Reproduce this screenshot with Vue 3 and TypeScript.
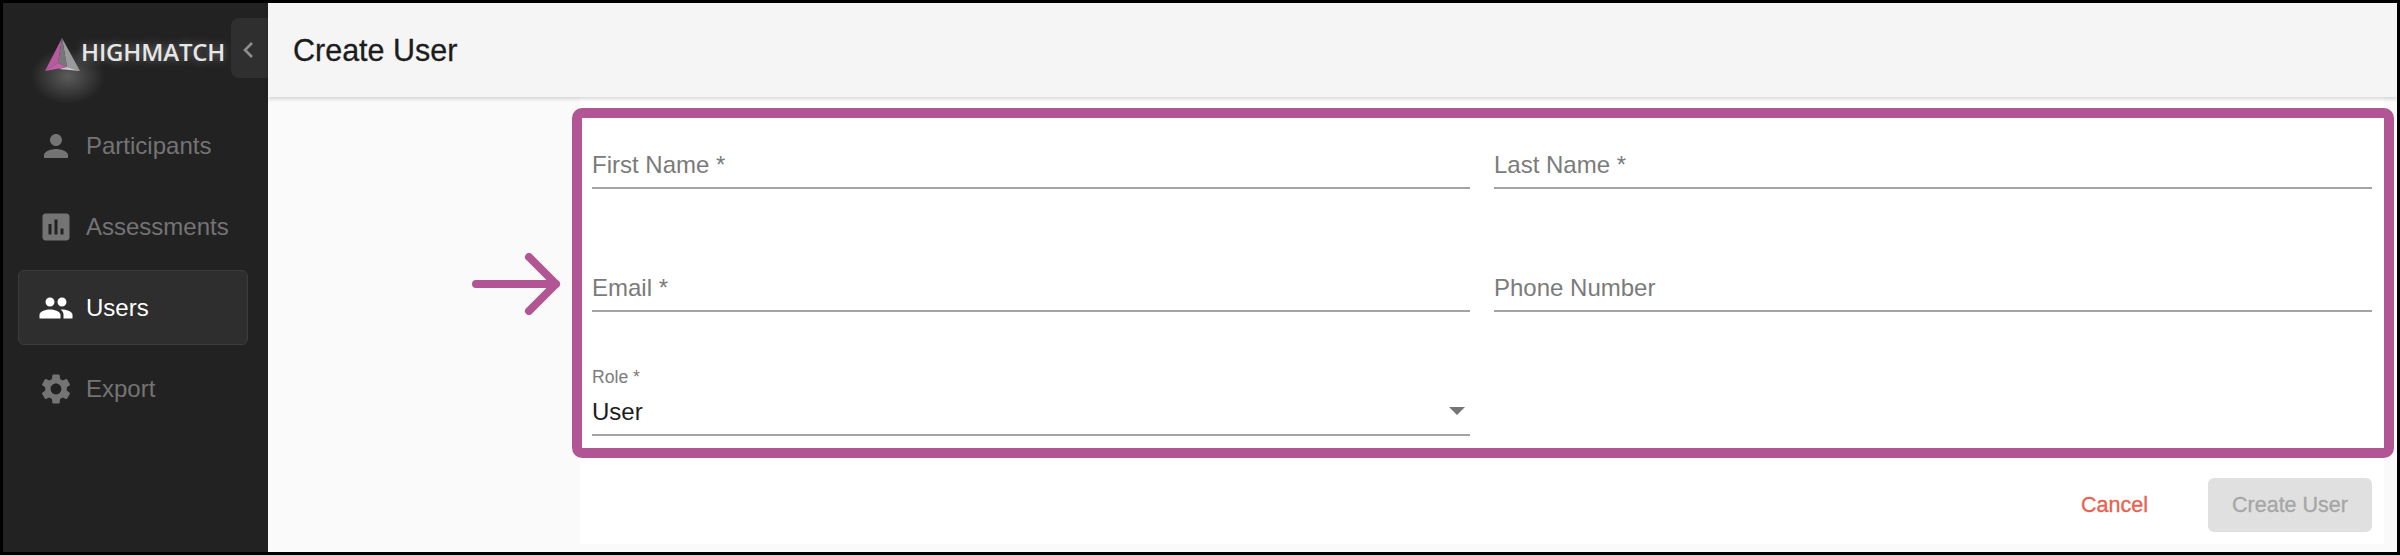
<template>
  <div class="page">
    <aside class="sidebar">
      <div class="brand">
        <div class="logo">
          <svg class="logo-mark" viewBox="0 0 36 34" aria-hidden="true">
            <polygon points="17,0 35,33 22,29" fill="#9a9a9c" />
            <polygon points="17,0 22,29 13,25" fill="#77777a" />
            <polygon points="17,0 13,25 0,33" fill="#b95aa0" />
            <polygon points="0,33 13,25 22,29" fill="#c060a6" />
            <polygon points="22,29 35,33 14,31" fill="#c9c9cb" />
          </svg>
          <span class="logo-text">HIGHMATCH</span>
        </div>
        <button class="collapse" type="button" aria-label="Collapse">
          <svg viewBox="0 0 12 18" aria-hidden="true">
            <path d="M10 2 L3 9 L10 16" />
          </svg>
        </button>
      </div>
      <nav class="nav">
        <a
          v-for="item in navItems"
          :key="item.label"
          class="nav-item"
          :class="{ active: item.active }"
        >
          <svg class="nav-icon" viewBox="0 0 24 24" aria-hidden="true">
            <path :d="item.icon" />
          </svg>
          <span>{{ item.label }}</span>
        </a>
      </nav>
    </aside>

    <main class="content">
      <header class="topbar">
        <h1>Create User</h1>
      </header>
      <section class="panel">
        <form class="form" @submit.prevent>
          <div v-for="field in fields" :key="field" class="field">
            <span class="placeholder">{{ field }}</span>
          </div>
          <div class="field select">
            <span class="select-label">Role *</span>
            <div class="select-value">
              <span>User</span>
              <span class="caret"></span>
            </div>
          </div>
        </form>
        <div class="actions">
          <button class="cancel" type="button">Cancel</button>
          <button class="submit" type="button" disabled>Create User</button>
        </div>

        <div class="highlight"></div>
        <svg class="arrow" viewBox="0 0 92 62" aria-hidden="true">
          <path d="M6 31 H86 M59 4 L86 31 L59 58" />
        </svg>
      </section>
    </main>
  </div>
</template>

<script setup lang="ts">
interface NavItem {
  label: string
  icon: string
  active?: boolean
}

const navItems: NavItem[] = [
  {
    label: 'Participants',
    icon: 'M12 12c2.21 0 4-1.79 4-4s-1.79-4-4-4-4 1.79-4 4 1.79 4 4 4zm0 2c-2.67 0-8 1.34-8 4v2h16v-2c0-2.66-5.33-4-8-4z'
  },
  {
    label: 'Assessments',
    icon: 'M19 3H5c-1.1 0-2 .9-2 2v14c0 1.1.9 2 2 2h14c1.1 0 2-.9 2-2V5c0-1.1-.9-2-2-2zM9 17H7v-7h2v7zm4 0h-2V7h2v10zm4 0h-2v-4h2v4z'
  },
  {
    label: 'Users',
    active: true,
    icon: 'M16 11c1.66 0 2.99-1.34 2.99-3S17.66 5 16 5c-1.66 0-3 1.34-3 3s1.34 3 3 3zm-8 0c1.66 0 2.99-1.34 2.99-3S9.66 5 8 5C6.34 5 5 6.34 5 8s1.34 3 3 3zm0 2c-2.33 0-7 1.17-7 3.5V19h14v-2.5c0-2.33-4.67-3.5-7-3.5zm8 0c-.29 0-.62.02-.97.05 1.16.84 1.97 1.97 1.97 3.45V19h6v-2.5c0-2.33-4.67-3.5-7-3.5z'
  },
  {
    label: 'Export',
    icon: 'M19.14 12.94c.04-.3.06-.61.06-.94 0-.32-.02-.64-.07-.94l2.03-1.58c.18-.14.23-.41.12-.61l-1.92-3.32c-.12-.22-.37-.29-.59-.22l-2.39.96c-.5-.38-1.03-.7-1.62-.94l-.36-2.54c-.04-.24-.24-.41-.48-.41h-3.84c-.24 0-.43.17-.47.41l-.36 2.54c-.59.24-1.13.57-1.62.94l-2.39-.96c-.22-.08-.47 0-.59.22L2.74 8.87c-.12.21-.08.47.12.61l2.03 1.58c-.05.3-.09.63-.09.94s.02.64.07.94l-2.03 1.58c-.18.14-.23.41-.12.61l1.92 3.32c.12.22.37.29.59.22l2.39-.96c.5.38 1.03.7 1.62.94l.36 2.54c.05.24.24.41.48.41h3.84c.24 0 .44-.17.47-.41l.36-2.54c.59-.24 1.13-.56 1.62-.94l2.39.96c.22.08.47 0 .59-.22l1.92-3.32c.12-.22.07-.47-.12-.61l-2.01-1.58zM12 15.6c-1.98 0-3.6-1.62-3.6-3.6s1.62-3.6 3.6-3.6 3.6 1.62 3.6 3.6-1.62 3.6-3.6 3.6z'
  }
]

const fields = ['First Name *', 'Last Name *', 'Email *', 'Phone Number']
</script>

<style>
html,
body {
  margin: 0;
  background: #d0d0d0;
}
</style>

<style scoped>
.page {
  display: flex;
  box-sizing: border-box;
  width: 2400px;
  height: 555px;
  border: 3px solid #000;
  background: #fafafa;
  font-family: "Liberation Sans", Arial, sans-serif;
  overflow: hidden;
}

.sidebar {
  flex: 0 0 265px;
  background: #222222;
}

.brand {
  display: flex;
  align-items: flex-start;
  justify-content: space-between;
  height: 105px;
  padding: 15px 0 0 42px;
  box-sizing: border-box;
}

.logo {
  position: relative;
  display: flex;
  align-items: flex-start;
  padding-top: 20px;
}

.logo::before {
  content: "";
  position: absolute;
  left: -14px;
  top: 30px;
  width: 74px;
  height: 56px;
  background: radial-gradient(closest-side, rgba(255, 255, 255, 0.26), rgba(255, 255, 255, 0));
}

.logo-mark {
  position: relative;
  width: 36px;
  height: 34px;
}

.logo-text {
  position: relative;
  margin-top: -1px;
  color: #e6e6e6;
  font-family: "Open Sans", sans-serif;
  font-size: 24px;
  font-weight: 600;
  letter-spacing: -0.15px;
  line-height: 30px;
  text-shadow: 0 0 8px rgba(255, 255, 255, 0.35);
}

.collapse {
  display: flex;
  align-items: center;
  justify-content: center;
  width: 37px;
  height: 60px;
  margin: 0;
  padding: 4px 3px 0 0;
  border: 0;
  border-radius: 8px 0 0 8px;
  background: #2f2f2f;
}

.collapse svg {
  width: 12px;
  height: 18px;
  fill: none;
  stroke: #8e8e8e;
  stroke-width: 2.6;
}

.nav {
  display: flex;
  flex-direction: column;
  gap: 6px;
  padding: 0 20px 0 15px;
}

.nav-item {
  display: flex;
  align-items: center;
  gap: 12px;
  box-sizing: border-box;
  height: 75px;
  padding-left: 19px;
  border: 1px solid transparent;
  border-radius: 6px;
  color: #747474;
  font-size: 24px;
}

.nav-item.active {
  border-color: #3c3c3c;
  background: #2e2e2e;
  color: #ffffff;
}

.nav-icon {
  flex: none;
  width: 36px;
  height: 36px;
  fill: currentColor;
}

.content {
  flex: 1;
  display: flex;
  flex-direction: column;
  min-width: 0;
}

.topbar {
  display: flex;
  align-items: center;
  flex: 0 0 94px;
  padding-left: 25px;
  background: #f5f5f5;
  box-shadow: 0 2px 4px rgba(0, 0, 0, 0.16);
  z-index: 1;
}

.topbar h1 {
  margin: 0;
  color: #1c1c1c;
  font-size: 30.5px;
  font-weight: 400;
  -webkit-text-stroke: 0.3px #1c1c1c;
}

.panel {
  position: relative;
  display: flex;
  flex-direction: column;
  height: 447px;
  margin: 0 13px 0 312px;
  padding: 16px 12px 12px;
  box-sizing: border-box;
  background: #ffffff;
}

.form {
  display: grid;
  grid-template-columns: 1fr 1fr;
  grid-template-rows: 76px 76px 77px;
  column-gap: 24px;
  row-gap: 47px;
}

.field {
  display: flex;
  flex-direction: column;
  justify-content: flex-end;
  box-sizing: border-box;
  border-bottom: 2px solid #a3a3a3;
  font-size: 24px;
}

.placeholder {
  color: #7b7b7b;
  line-height: 45px;
}

.select-label {
  color: #7b7b7b;
  font-size: 17.6px;
  line-height: 22px;
}

.select-value {
  display: flex;
  align-items: center;
  justify-content: space-between;
  box-sizing: border-box;
  height: 46px;
  padding: 1px 5px 0 0;
  color: #1c1c1c;
}

.caret {
  width: 0;
  height: 0;
  margin-top: -2px;
  border-left: 8px solid transparent;
  border-right: 8px solid transparent;
  border-top: 8px solid #757575;
}

.actions {
  display: flex;
  align-items: center;
  justify-content: flex-end;
  gap: 60px;
  margin-top: 42px;
}

.actions button {
  border: 0;
  padding: 0;
  font-family: inherit;
  font-size: 21.5px;
  -webkit-text-stroke: 0.3px currentColor;
}

.cancel {
  background: transparent;
  color: #e8604f;
}

.submit {
  width: 164px;
  height: 54px;
  border-radius: 6px;
  background: #e0e0e0;
  color: #a6a6a6;
}

.highlight {
  position: absolute;
  left: -8px;
  right: -10px;
  top: 11px;
  height: 350px;
  box-sizing: border-box;
  border: 10px solid #b25594;
  border-radius: 10px;
  pointer-events: none;
}

.arrow {
  position: absolute;
  left: -110px;
  top: 156px;
  width: 92px;
  height: 62px;
  fill: none;
  stroke: #b25594;
  stroke-width: 8;
  stroke-linecap: round;
  stroke-linejoin: round;
}
</style>
